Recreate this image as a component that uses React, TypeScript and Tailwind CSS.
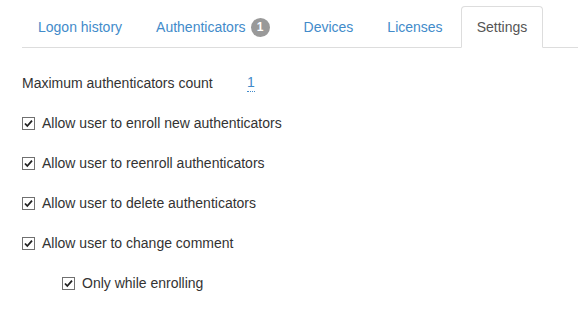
import React from "react";

const tabs = [
  { label: "Logon history" },
  { label: "Authenticators", badge: "1" },
  { label: "Devices" },
  { label: "Licenses" },
  { label: "Settings", active: true },
];

function CheckBox() {
  return (
    <svg width="13" height="13" viewBox="0 0 13 13" className="shrink-0">
      <rect x="0.5" y="0.5" width="12" height="12" fill="#fff" stroke="#707070" />
      <path d="M3 6.5 L5.3 9 L10 3.6" fill="none" stroke="#222" strokeWidth="1.8" />
    </svg>
  );
}

function CheckRow({ label, nested }: { label: string; nested?: boolean }) {
  return (
    <label className={`flex items-center h-5 gap-[7px] ${nested ? "pl-10" : ""}`}>
      <CheckBox />
      <span>{label}</span>
    </label>
  );
}

export default function App() {
  return (
    <div
      className="w-[578px] h-[322px] bg-white pl-[22px] pt-[6px] text-[14px] leading-5 text-[#333]"
      style={{ fontFamily: '"Liberation Sans", Arial, sans-serif' }}
    >
      <ul className="flex border-b border-[#ddd]">
        {tabs.map((t) => (
          <li key={t.label} className="mr-[2px] -mb-px">
            <a
              className={`flex items-center px-[15px] py-[10px] border rounded-t-[4px] ${
                t.active
                  ? "bg-white border-[#ddd] border-b-transparent text-[#555]"
                  : "border-transparent text-[#428bca]"
              }`}
            >
              {t.label}
              {t.badge && (
                <span className="ml-[5px] w-[19px] h-[19px] rounded-full bg-[#999] text-white text-[12px] font-bold flex items-center justify-center leading-none">
                  {t.badge}
                </span>
              )}
            </a>
          </li>
        ))}
      </ul>

      <div className="pt-[25px]">
        <div className="flex h-5 items-center">
          <span className="w-[225px]">Maximum authenticators count</span>
          <span className="text-[#428bca] border-b border-dotted border-[#428bca] leading-[17px]">1</span>
        </div>
        <div className="mt-5 flex flex-col gap-5">
          <CheckRow label="Allow user to enroll new authenticators" />
          <CheckRow label="Allow user to reenroll authenticators" />
          <CheckRow label="Allow user to delete authenticators" />
          <CheckRow label="Allow user to change comment" />
          <CheckRow label="Only while enrolling" nested />
        </div>
      </div>
    </div>
  );
}
